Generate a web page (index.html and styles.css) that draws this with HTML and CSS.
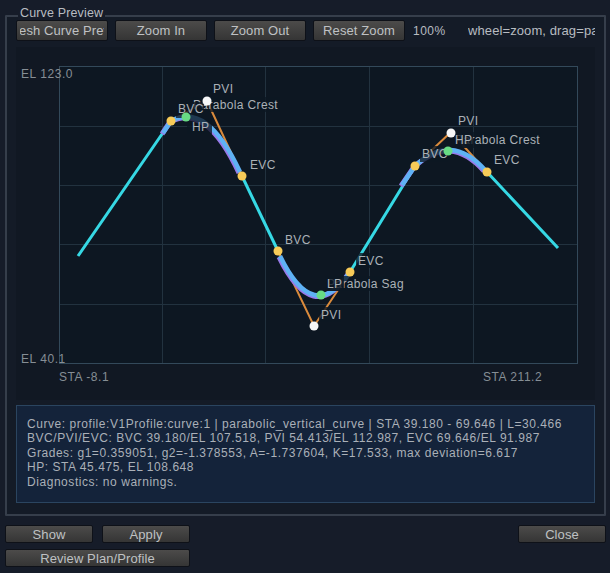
FILE: index.html
```html
<!DOCTYPE html>
<html lang="en">
<head>
<meta charset="utf-8">
<title>Curve Preview</title>
<link rel="stylesheet" href="styles.css">
</head>
<body>
<section class="group">
  <h2 class="legend">Curve Preview</h2>
  <div class="toolbar">
    <button class="btn"><span class="clip"><span class="clip-text">Refresh Curve Preview</span></span></button>
    <button class="btn">Zoom In</button>
    <button class="btn">Zoom Out</button>
    <button class="btn">Reset Zoom</button>
    <span class="pct">100%</span>
    <span class="hint">wheel=zoom, drag=pan</span>
  </div>
  <svg class="plot" viewBox="16 47 579 353" width="579" height="353">
    <rect class="frame" x="59.5" y="66.5" width="518" height="297"/>
    <path class="grid" d="M162.5 67V363M265.5 67V363M369.5 67V363M473.5 67V363M60 126.5H577M60 185.5H577M60 244.5H577M60 304.5H577"/>
    <rect class="frame-line" x="59.5" y="66.5" width="518" height="297"/>
    <text class="axis" x="21" y="78">EL 123.0</text>
    <text class="axis" x="21" y="363">EL 40.1</text>
    <text class="axis" x="59" y="381">STA -8.1</text>
    <text class="axis" x="483" y="381">STA 211.2</text>

    <path class="tangent" d="M171 121L207 101L242 176"/>
    <path class="tangent" d="M278 251L314 326L350 272"/>
    <path class="tangent" d="M415 166L451 132L487 172"/>

    <path class="align" d="M78 256L171 121M242 176L278 251M350 272L415 166M487 172L558 248"/>
    <path class="under" d="M163 133L171 121Q207 101 240 172"/>
    <path class="under" d="M280 256Q314 326 350 272"/>
    <path class="under" d="M402 185L415 166Q451 132 485 170"/>
    <path class="curve" d="M163 133L171 121Q207 101 240 172"/>
    <path class="curve" d="M280 256Q314 326 350 272"/>
    <path class="curve" d="M402 185L415 166Q451 132 485 170"/>

    <rect class="tag" x="191" y="97" width="89" height="15"/>
    <text class="lbl" x="193" y="109">Parabola Crest</text>
    <rect class="tag" x="176" y="102" width="28" height="16"/>
    <text class="lbl" x="178" y="113">BVC</text>
    <rect class="tag" x="187" y="118" width="25" height="16"/>
    <text class="lbl" x="192" y="131">HP</text>
    <text class="lbl" x="213" y="93">PVI</text>
    <text class="lbl" x="250" y="169">EVC</text>

    <rect class="tag" x="325" y="276" width="80" height="15"/>
    <text class="lbl" x="327" y="288">Parabola Sag</text>
    <rect class="tag" x="325" y="276" width="19" height="15"/>
    <text class="lbl" x="327" y="288">LP</text>
    <text class="lbl" x="285" y="244">BVC</text>
    <rect class="tag" x="356" y="253" width="27" height="15"/>
    <text class="lbl" x="358" y="265">EVC</text>
    <rect class="tag" x="319" y="307" width="22" height="15"/>
    <text class="lbl" x="321" y="319">PVI</text>

    <rect class="tag" x="453" y="132" width="88" height="16"/>
    <text class="lbl" x="455" y="144">Parabola Crest</text>
    <rect class="tag" x="453" y="132" width="20" height="16"/>
    <text class="lbl" x="455" y="144">HP</text>
    <rect class="tag" x="420" y="146" width="28" height="16"/>
    <text class="lbl" x="422" y="158">BVC</text>
    <text class="lbl" x="458" y="125">PVI</text>
    <text class="lbl" x="494" y="164">EVC</text>

    <circle class="dot bvc" cx="171" cy="121" r="4.5"/>
    <circle class="dot hp" cx="186" cy="117" r="4.5"/>
    <circle class="dot pvi" cx="207" cy="101" r="4.5"/>
    <circle class="dot bvc" cx="242" cy="176" r="4.5"/>
    <circle class="dot bvc" cx="278" cy="251" r="4.5"/>
    <circle class="dot hp" cx="321" cy="295" r="4.5"/>
    <circle class="dot pvi" cx="314" cy="326" r="4.5"/>
    <circle class="dot bvc" cx="350" cy="272" r="4.5"/>
    <circle class="dot bvc" cx="415" cy="166" r="4.5"/>
    <circle class="dot hp" cx="448" cy="151" r="4.5"/>
    <circle class="dot pvi" cx="451" cy="133" r="4.5"/>
    <circle class="dot bvc" cx="487" cy="172" r="4.5"/>
  </svg>
  <div class="info">
    <p>Curve: profile:V1Profile:curve:1 | parabolic_vertical_curve | STA 39.180 - 69.646 | L=30.466</p>
    <p>BVC/PVI/EVC: BVC 39.180/EL 107.518, PVI 54.413/EL 112.987, EVC 69.646/EL 91.987</p>
    <p>Grades: g1=0.359051, g2=-1.378553, A=-1.737604, K=17.533, max deviation=6.617</p>
    <p>HP: STA 45.475, EL 108.648</p>
    <p>Diagnostics: no warnings.</p>
  </div>
</section>
<footer class="actions">
  <div class="actions-left">
    <div class="row">
      <button class="btn small">Show</button>
      <button class="btn small">Apply</button>
    </div>
    <button class="btn wide">Review Plan/Profile</button>
  </div>
  <button class="btn small">Close</button>
</footer>
</body>
</html>
```
FILE: styles.css
```css
* { box-sizing: border-box; }
html, body { margin: 0; height: 100%; }
body {
  background: #161c29;
  padding: 15px 4px 0 5px;
  font: 12px "Liberation Sans", Arial, sans-serif;
  letter-spacing: 0.35px;
  color: #b8bcc1;
  overflow: hidden;
}
.group {
  position: relative;
  height: 501px;
  border: 2px solid #363e4b;
  border-radius: 1px;
  padding: 3px 9px 0;
  background: #141b27;
}
.legend {
  position: absolute;
  left: 11px;
  top: -11px;
  margin: 0;
  padding: 0 2px;
  font-size: 12.5px;
  font-weight: normal;
  letter-spacing: 0.15px;
  line-height: 14px;
  background: #161c29;
  color: #b8bcc1;
}
.toolbar {
  display: flex;
  align-items: center;
  height: 21px;
}
.btn {
  height: 21px;
  width: 92px;
  padding: 0;
  margin: 0;
  border: 1px solid #0e1118;
  border-radius: 2px;
  background: linear-gradient(#4c4b4a, #353535);
  color: #bfc1c3;
  font: inherit;
  letter-spacing: 0.1px;
  font-size: 13px;
  white-space: nowrap;
  display: flex;
  align-items: center;
  justify-content: center;
  overflow: hidden;
}
.toolbar .btn { margin-right: 7px; }
.clip {
  display: flex;
  justify-content: center;
  width: 84px;
  overflow: hidden;
}
.clip-text { flex: none; }
.pct { margin-left: 1px; width: 55px; letter-spacing: 0.5px; }
.hint { flex: 1; overflow: hidden; white-space: nowrap; font-size: 13px; letter-spacing: 0.1px; }
.plot {
  display: block;
  margin-top: 6px;
  background: #111823;
}
.frame { fill: #0d1722; }
.frame-line { fill: none; stroke: #33495a; stroke-width: 1; }
.grid { fill: none; stroke: #22323f; stroke-width: 1; }
.axis { fill: #868e95; font-size: 12px; letter-spacing: 0.55px; }
.lbl { fill: #abb1b7; font-size: 12px; letter-spacing: 0.35px; }
.tag { fill: #0d1722; fill-opacity: 0.78; }
.tangent { fill: none; stroke: #d98a3c; stroke-width: 2; }
.align { fill: none; stroke: #36d8e4; stroke-width: 3; }
.under { fill: none; stroke: #9a78e8; stroke-width: 5; transform: translate(-1px, 1px); }
.curve { fill: none; stroke: #5fb2f5; stroke-width: 4.5; }
.dot { stroke: none; }
.bvc { fill: #f7cb58; }
.hp { fill: #68dc84; }
.pvi { fill: #f6f7f8; }
.info {
  margin-top: 5px;
  height: 98px;
  padding: 11px 10px;
  border: 1px solid #2b4560;
  background: #14233a;
  color: #aab0b8;
  overflow: hidden;
  letter-spacing: 0.55px;
}
.info p { margin: 0; line-height: 14.4px; white-space: nowrap; }
.actions {
  display: flex;
  justify-content: space-between;
  align-items: flex-start;
  margin-top: 9px;
}
.actions-left { display: flex; flex-direction: column; gap: 6px; }
.row { display: flex; gap: 9px; }
.actions .btn { height: 18px; }
.small { width: 88px; }
.wide { width: 185px; }
```
